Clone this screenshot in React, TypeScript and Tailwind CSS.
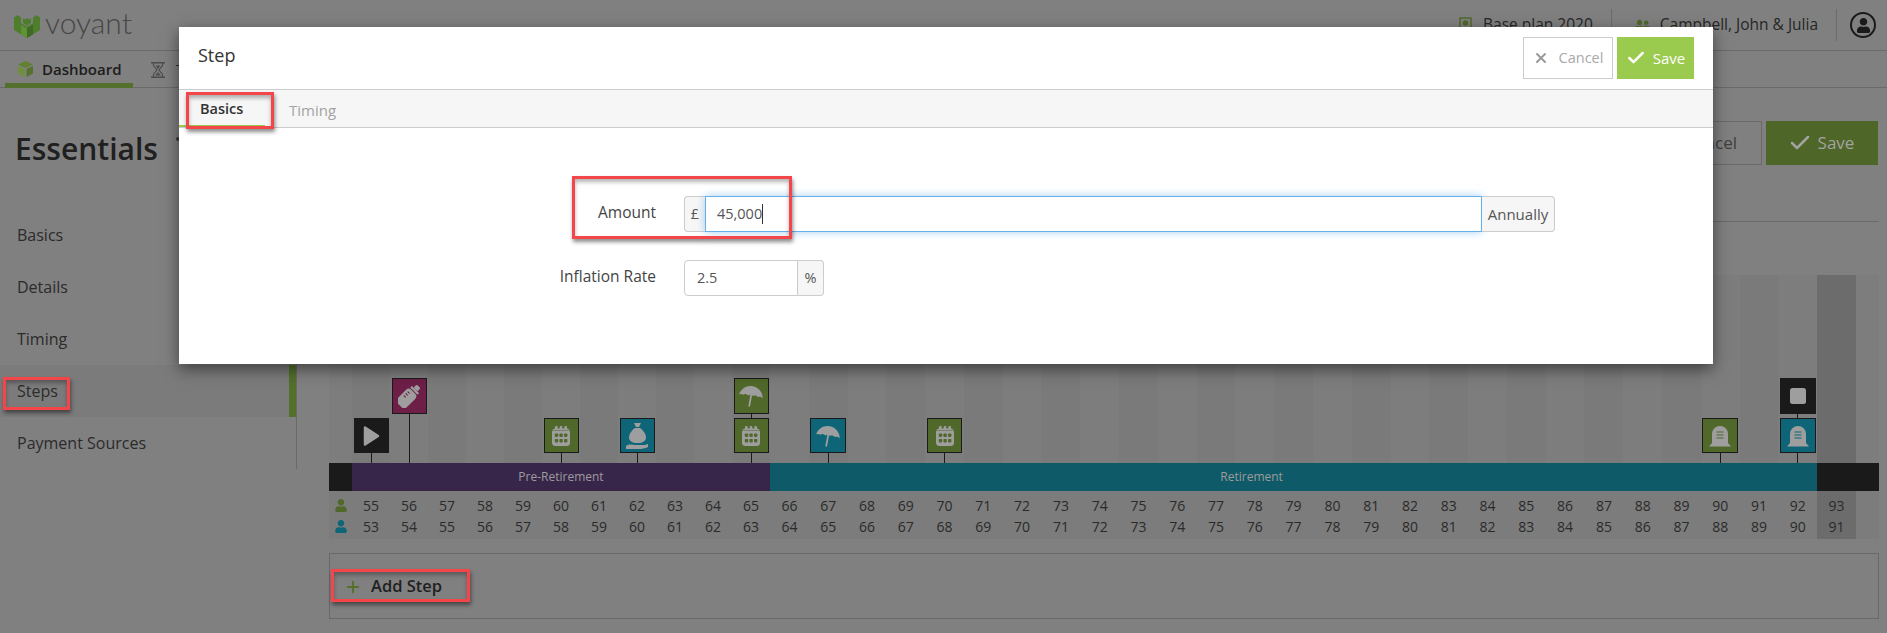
import React from "react";
import { Check, Plus, X } from "lucide-react";
import { FaUser, FaUserFriends } from "react-icons/fa";

const GRID =
	"grid grid-cols-[23px_repeat(11,38px)_repeat(28,minmax(0,1fr))_23px]";

const ICON = "#9e9e9e";
const GREEN = "#50692a";
const TEAL = "#0d6577";
const BLACK = "#1a1a1a";
const CRIMSON = "#6d1f47";

const Play = () => (
	<svg width="18" height="22" viewBox="0 0 18 22">
		<path d="M3 2.500 16 11 3 19.500z" fill={ICON} stroke={ICON} strokeWidth="2.500" strokeLinejoin="round" />
	</svg>
);

const Stop = () => (
	<svg width="20" height="20" viewBox="0 0 20 20">
		<rect x="2" y="2" width="16" height="16" rx="2.500" fill={ICON} />
	</svg>
);

const Bottle = () => (
	<svg width="22" height="24" viewBox="0 0 24 26">
		<g transform="rotate(45 12 13)">
			<rect x="9" y="-2" width="6" height="5" rx="2" fill={ICON} />
			<rect x="6.500" y="3" width="11" height="2.500" fill={ICON} />
			<rect x="5" y="6.500" width="14" height="21" rx="4" fill={ICON} />
			<rect x="7.500" y="10" width="3" height="1.200" fill={CRIMSON} />
			<rect x="7.500" y="13" width="3" height="1.200" fill={CRIMSON} />
			<rect x="7.500" y="16" width="3" height="1.200" fill={CRIMSON} />
		</g>
	</svg>
);

const Calendar = ({ hole }: { hole: string }) => (
	<svg width="18" height="20" viewBox="0 0 18 20">
		<rect x="0" y="2.500" width="18" height="17.500" rx="3.500" fill={ICON} />
		{[3, 7.700, 12.400].map((x) => (
			<rect key={x} x={x} y="0" width="2.600" height="4" rx="1" fill={ICON} />
		))}
		<rect x="0" y="4" width="18" height="1" fill={hole} opacity="0.5" />
		{[2.800, 7.400, 12].map((x) => (
			<React.Fragment key={x}>
				<rect x={x} y="7.500" width="3.400" height="3.400" rx="0.800" fill={hole} />
				<rect x={x} y="13" width="3.400" height="3.400" rx="0.800" fill={hole} />
			</React.Fragment>
		))}
	</svg>
);

const Bag = () => (
	<svg width="24" height="28" viewBox="0 0 24 28">
		<path d="M9 1h7l-2 4h-3z" fill={ICON} />
		<path d="M10 6h5c3 2 6 6 6 9.500 0 3.500-3 5.500-8.500 5.500S4 19 4 15.500C4 12 7 8 10 6z" fill={ICON} />
		<path d="M1 24c3-2 6-1.500 9-1h8c2 0 4-.5 5-1v3c-3 1.500-6 2-10 2H1z" fill={ICON} />
	</svg>
);

const Umbrella = () => (
	<svg width="26" height="24" viewBox="0 0 26 24">
		<g transform="rotate(10 13 12)">
			<path d="M1 12.500C2 6 7 2 13 2s11 4 12 10.500c-1.500-1.500-3.200-1.700-5-.6-1.500-1.300-3.500-1.400-5-.2-1.500-1-3.500-1-5 .2-1.500-1.200-3.500-1.100-5 .3-1.400-.8-2.800-.7-4 .3z" fill={ICON} />
			<path d="M13 11v11" stroke={ICON} strokeWidth="1.800" strokeLinecap="round" />
		</g>
	</svg>
);

const Tomb = ({ hole }: { hole: string }) => (
	<svg width="24" height="22" viewBox="0 0 24 22">
		<path d="M4 18V9a8 8 0 0 1 16 0v9l3 3.500H1z" fill={ICON} />
		<path d="M8.500 7h7M8.500 10h7M8.500 13h7" stroke={hole} strokeWidth="1.200" />
	</svg>
);

const Timer = () => (
	<svg width="14" height="16" viewBox="0 0 14 16" fill="none" stroke="#4d4d4d">
		<path d="M0 .75h14M0 15.250h14" strokeWidth="1.500" />
		<path d="M2.500 1v2.500L6 8l-3.500 4.500V15M11.500 1v2.500L8 8l3.500 4.500V15" strokeWidth="1.200" />
		<path d="M4 13.500 7 10l3 3.500zM4.500 3.500h5L7 7z" fill="#4d4d4d" stroke="none" />
	</svg>
);

const stepMarkers: Record<number, { bg: string; icon: React.ReactNode }[]> = {
	55: [{ bg: BLACK, icon: <Play /> }],
	56: [{ bg: CRIMSON, icon: <Bottle /> }],
	60: [{ bg: GREEN, icon: <Calendar hole={GREEN} /> }],
	62: [{ bg: TEAL, icon: <Bag /> }],
	65: [
		{ bg: GREEN, icon: <Umbrella /> },
		{ bg: GREEN, icon: <Calendar hole={GREEN} /> },
	],
	67: [{ bg: TEAL, icon: <Umbrella /> }],
	70: [{ bg: GREEN, icon: <Calendar hole={GREEN} /> }],
	90: [{ bg: GREEN, icon: <Tomb hole={GREEN} /> }],
	92: [
		{ bg: BLACK, icon: <Stop /> },
		{ bg: TEAL, icon: <Tomb hole={TEAL} /> },
	],
};

const ages = Array.from({ length: 39 }, (_, i) => 55 + i);

const stripeClass = (i: number) =>
	i === 38 ? "bg-[#6c6c6c]" : i % 2 === 0 ? "bg-[#7a7a7a]" : "bg-[#7d7d7d]";

const Timeline: React.FC = () => (
	<div className="mt-[53px]">
		<div className={`${GRID} h-[188px]`}>
			<div className="bg-[#7d7d7d]" />
			{ages.map((age, i) => {
				const markers = stepMarkers[age] ?? [];
				const tall = age === 56;
				return (
					<div key={age} className={`flex flex-col items-center justify-end ${stripeClass(i)}`}>
						{markers.map((m, j) => {
							const last = j === markers.length - 1;
							return (
								<React.Fragment key={j}>
									<div
										className={`flex w-[calc(100%-3px)] items-center justify-center border border-[#1a1a1a] ${
											(markers.length === 2 && j === 0) || tall ? "h-[36px]" : "h-[35px]"
										}`}
										style={{ backgroundColor: m.bg }}
									>
										{m.icon}
									</div>
									<div
										className={`w-px bg-[#1a1a1a] ${tall ? "h-[49px]" : last ? "h-[10px]" : "h-[4px]"}`}
									/>
								</React.Fragment>
							);
						})}
					</div>
				);
			})}
			<div className="bg-[#7d7d7d]" />
		</div>
		<div className={`${GRID} h-[28px] text-[12px] leading-[28px] text-[#9c9c9c]`}>
			<div className="bg-[#1a1a1a]" />
			<div className="col-span-11 bg-[#38264a] text-center">Pre-Retirement</div>
			<div className="col-span-[27] bg-[#0f5a68] pr-[84px] text-center">Retirement</div>
			<div className="col-span-2 bg-[#1a1a1a]" />
		</div>
		<div className={`${GRID} h-[48px] bg-[#7c7c7c] text-[14px] leading-[21px] text-[#2a2a2a]`}>
			<div className="flex flex-col items-center pt-[4px]">
				<div className="flex h-[21px] items-center">
					<FaUser className="h-[13px] w-[12px] text-[#50692a]" />
				</div>
				<div className="flex h-[21px] items-center">
					<FaUser className="h-[13px] w-[12px] text-[#0d6577]" />
				</div>
			</div>
			{ages.map((age, i) => (
				<div key={age} className={`pt-[4px] text-center ${i === 38 ? "bg-[#6c6c6c]" : ""}`}>
					<div>{age}</div>
					<div>{age - 2}</div>
				</div>
			))}
			<div />
		</div>
	</div>
);

const Page: React.FC = () => (
	<div className="h-[633px] w-[1887px] overflow-hidden bg-[#808080] text-[#262626]">
		<div className="flex h-[51px] items-center border-b border-[#6a6a6a] pl-[14px] pr-[11px]">
			<svg width="26" height="25" viewBox="0 0 26 25">
				<path d="M0 4.500 3.500 2 7 4.500V10l6 3.500L19 10V4.500L22.500 2 26 4.500V17l-13 8-13-8z" fill="#4e7d2c" />
				<path d="M9 5l2 1.500L13 5l2 1.500L17 5v5l-4 2.500L9 10z" fill="#4e7d2c" />
				<path d="M7 12l6 3.500V25L7 21.500z" fill="#5f9236" />
				<path d="M19 12l-6 3.500V25l6-3.500z" fill="#3f6a26" />
			</svg>
			<span className="ml-[5px] -mt-[6px] font-['Lato'] text-[30px] font-light leading-none text-[#474747]">
				voyant
			</span>
			<div className="ml-auto mt-[8px] flex h-[33px] items-center self-start text-[15.500px]">
				<svg width="13" height="16" viewBox="0 0 13 16" fill="none" stroke="#50692a" strokeWidth="1.500">
					<rect x="1" y="1" width="11" height="14" />
					<circle cx="6.500" cy="6" r="2" fill="#50692a" />
				</svg>
				<span className="ml-[11px]">Base plan 2020</span>
				<div className="ml-[18px] h-[32px] w-px bg-[#6a6a6a]" />
				<FaUserFriends className="ml-[23px] h-[16px] w-[15px] text-[#50692a]" />
				<span className="ml-[10px]">Campbell, John &amp; Julia</span>
				<div className="ml-[18px] h-[32px] w-px bg-[#6a6a6a]" />
				<div className="ml-[13px] flex h-[26px] w-[26px] items-center justify-center overflow-hidden rounded-full border-2 border-[#1a1a1a]">
					<FaUser className="mt-[2px] h-[15px] w-[15px] text-[#1a1a1a]" />
				</div>
			</div>
		</div>
		<div className="flex h-[37px] items-center border-b border-[#6a6a6a] pl-[5px] text-[15px]">
			<div className="flex h-[37px] w-[128px] items-center border-b-[5px] border-[#53702c] pl-[13px] pt-[5px] font-semibold text-[#1c1c1c]">
				<svg width="15" height="16" viewBox="0 0 15 16">
					<path d="M7.500 0 15 3.500 7.500 7 0 3.500z" fill="#62802f" />
					<path d="M0 5l6.500 3v8L0 12.500z" fill="#6f8f3a" />
					<path d="M15 5 8.500 8v8l6.500-3.500z" fill="#55712a" />
				</svg>
				<span className="ml-[9px]">Dashboard</span>
			</div>
			<div className="ml-[18px] flex items-center pt-[2px]">
				<Timer />
			</div>
			<span className="ml-[11px]">T</span>
		</div>
		<div className="flex">
			<div className="w-[297px] shrink-0">
				<div className="flex h-[121px] items-center pl-[15px]">
					<span className="text-[30px] font-semibold leading-none text-[#202020]">Essentials</span>
					<span className="ml-[18px] -mt-[20px] h-[4px] w-[4px] rounded-full bg-[#3a3a3a]" />
				</div>
				<div className="border-r border-[#6a6a6a] text-[16px] text-[#2b2b2b]">
					<div className="flex h-[52px] items-center pl-[17px]">Basics</div>
					<div className="flex h-[52px] items-center pl-[17px]">Details</div>
					<div className="flex h-[52px] items-center pl-[17px]">Timing</div>
					<div className="flex h-[52px] items-center border-r-[7px] border-[#53702c] bg-[#7b7b7b] pl-[17px]">
						Steps
					</div>
					<div className="flex h-[52px] items-center pl-[17px]">Payment Sources</div>
				</div>
			</div>
			<div className="ml-[32px] w-[1550px] pt-[33px]">
				<div className="flex justify-end gap-[4px] text-[17px]">
					<div className="flex h-[44px] w-[120px] items-center justify-end border border-[#6a6a6a] pr-[24px] text-[#3f3f3f]">
						Cancel
					</div>
					<div className="mr-px flex h-[44px] w-[112px] items-center justify-center gap-[6px] bg-[#4e6627] pr-[2px] text-[#a3a3a3]">
						<Check className="h-[24px] w-[24px]" strokeWidth={2.500} />
						Save
					</div>
				</div>
				<div className="mt-[56px] h-px bg-[#6a6a6a]" />
				<Timeline />
				<div className="mt-[14px] flex h-[66px] items-center border border-[#686868] pl-[14px] pt-[1px] text-[16.500px] font-semibold text-[#1f1f1f]">
					<Plus className="h-[18px] w-[18px] text-[#53702c]" strokeWidth={2.500} />
					<span className="ml-[9px]">Add Step</span>
				</div>
			</div>
		</div>
	</div>
);

const Modal: React.FC = () => (
	<div className="absolute left-[179px] top-[27px] h-[337px] w-[1534px] bg-white shadow-[0_5px_15px_rgba(0,0,0,0.5)]">
		<div className="flex h-[63px] items-center border-b border-[#cccccc] pl-[19px] pr-[19px]">
			<span className="-mt-[5px] text-[18px] text-[#333333]">Step</span>
			<div className="ml-auto flex gap-[4px] text-[14.500px]">
				<div className="flex h-[42px] w-[90px] items-center justify-center gap-[10px] border border-[#cccccc] text-[#a9a9a9]">
					<X className="h-[16px] w-[16px] text-[#9a9a9a]" strokeWidth={3} />
					Cancel
				</div>
				<div className="flex h-[42px] w-[77px] items-center justify-center gap-[7px] bg-[#9bcb4e] text-[15px] font-medium text-white">
					<Check className="h-[20px] w-[20px]" strokeWidth={3} />
					Save
				</div>
			</div>
		</div>
		<div className="flex h-[38px] border-b border-[#cccccc] bg-[#f6f6f6] pt-[3px] text-[15px]">
			<div className="flex w-[86px] items-center border-b-2 border-[#9bcb4e] pl-[21px] text-[14.500px] font-semibold text-[#333333]">
				Basics
			</div>
			<div className="ml-[24px] flex items-center text-[#a3a3a3]">Timing</div>
		</div>
		<div className="pt-[68px] text-[14.500px] text-[#555555]">
			<div className="flex">
				<div className="flex h-[36px] w-[477px] items-center justify-end pb-[2px] text-[15.500px] font-medium text-[#444444]">
					Amount
				</div>
				<div className="ml-[28px] flex h-[36px] w-[871px]">
					<div className="flex w-[21px] items-center justify-center rounded-l-[4px] border border-r-0 border-[#cccccc] bg-[#f6f6f6]">
						£
					</div>
					<div className="flex min-w-0 flex-1 items-center border border-[#66afe9] pl-[11px] shadow-[0_0_8px_rgba(102,175,233,0.6)]">
						45,000
						<span className="h-[20px] w-px bg-[#333333]" />
					</div>
					<div className="flex w-[73px] items-center justify-center rounded-r-[4px] border border-l-0 border-[#cccccc] bg-[#f6f6f6] text-[15px]">
						Annually
					</div>
				</div>
			</div>
			<div className="mt-[28px] flex">
				<div className="flex h-[36px] w-[477px] items-center justify-end pb-[2px] text-[15.500px] font-medium text-[#444444]">
					Inflation Rate
				</div>
				<div className="ml-[28px] flex h-[36px] w-[140px]">
					<div className="flex min-w-0 flex-1 items-center rounded-l-[4px] border border-[#cccccc] pl-[12px]">
						2.5
					</div>
					<div className="flex w-[26px] items-center justify-center rounded-r-[4px] border border-l-0 border-[#cccccc] bg-[#f6f6f6]">
						%
					</div>
				</div>
			</div>
		</div>
	</div>
);

const HIGHLIGHT =
	"absolute border-[3px] border-[#f4454a] shadow-[1px_3px_4px_rgba(0,0,0,0.45),inset_0_3px_4px_rgba(0,0,0,0.3)]";

export default function App() {
	return (
		<div className="relative h-[633px] w-[1887px] overflow-hidden font-['Open_Sans',sans-serif]">
			<Page />
			<Modal />
			{/* red call-outs drawn over the screenshot */}
			<div className={`${HIGHLIGHT} left-[186px] top-[92px] h-[37px] w-[88px]`} />
			<div className={`${HIGHLIGHT} left-[572px] top-[176px] h-[63px] w-[220px]`} />
			<div className={`${HIGHLIGHT} left-[3px] top-[377px] h-[33px] w-[67px]`} />
			<div className={`${HIGHLIGHT} left-[331px] top-[569px] h-[33px] w-[139px]`} />
		</div>
	);
}
